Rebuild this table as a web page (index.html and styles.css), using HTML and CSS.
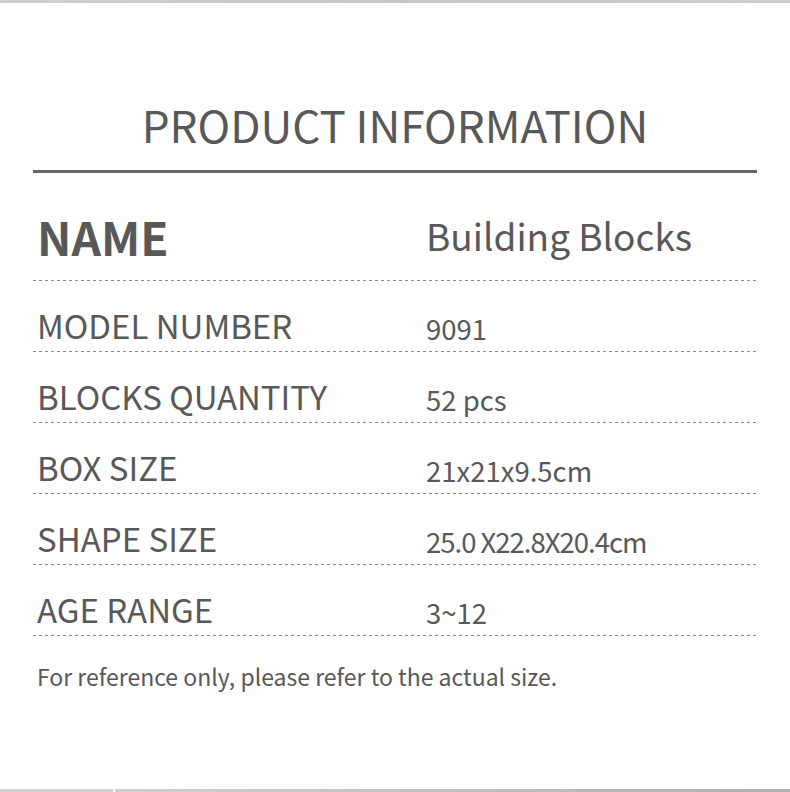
FILE: index.html
```html
<!DOCTYPE html>
<html lang="en">
<head>
<meta charset="utf-8">
<title>Product Information</title>
<link rel="stylesheet" href="styles.css">
</head>
<body>
<div class="page">
  <div class="top-bar"></div>
  <div class="sheet">
    <header class="header">
      <h1 class="title">PRODUCT INFORMATION</h1>
    </header>
    <div class="row row-name">
      <div class="label label-name">NAME</div>
      <div class="value value-name">Building Blocks</div>
    </div>
    <div class="row">
      <div class="label">MODEL NUMBER</div>
      <div class="value">9091</div>
    </div>
    <div class="row">
      <div class="label">BLOCKS QUANTITY</div>
      <div class="value">52 pcs</div>
    </div>
    <div class="row">
      <div class="label">BOX SIZE</div>
      <div class="value">21x21x9.5cm</div>
    </div>
    <div class="row">
      <div class="label">SHAPE SIZE</div>
      <div class="value value-tight">25.0 X22.8X20.4cm</div>
    </div>
    <div class="row">
      <div class="label">AGE RANGE</div>
      <div class="value">3~12</div>
    </div>
    <p class="note">For reference only, please refer to the actual size.</p>
  </div>
  <div class="bottom-bar">
    <div class="seg seg-left"></div>
    <div class="seg seg-right"></div>
  </div>
</div>
</body>
</html>
```
FILE: styles.css
```css
* { box-sizing: border-box; }
html, body { margin: 0; padding: 0; background: #fff; }
body {
  font-family: "Noto Sans CJK SC", "Source Sans Pro", "Open Sans", sans-serif;
  color: #585858;
}
.page {
  width: 790px;
  height: 792px;
  overflow: hidden;
  display: flex;
  flex-direction: column;
}
.top-bar {
  height: 3px;
  flex: none;
  background: linear-gradient(90deg, #cfcfcf, #c6c6c6 50%, #cdcdcd);
}
.sheet {
  flex: 1;
  padding: 0 33px;
}
.header {
  padding-top: 99px;
  padding-bottom: 24px;
  border-bottom: 3px solid #666;
  text-align: center;
}
.title {
  margin: 0;
  font-size: 44px;
  line-height: 44px;
  font-weight: 400;
  color: #585858;
}
.row {
  display: flex;
  align-items: flex-start;
  height: 71px;
  padding-left: 4px;
  background: repeating-linear-gradient(90deg, #8a8a8a 0 3px, transparent 3px 6px) left bottom / 100% 1px no-repeat;
}
.row-name { height: 108px; }
.label {
  width: 389px;
  flex: none;
  font-size: 33px;
  line-height: 33px;
  padding-top: 28px;
}
.value {
  font-size: 27.5px;
  line-height: 28px;
  padding-top: 33px;
}
.value-tight { letter-spacing: -1px; }
.label-name {
  font-size: 46px;
  line-height: 48px;
  font-weight: 700;
  padding-top: 39px;
}
.value-name {
  font-size: 37px;
  line-height: 40px;
  padding-top: 42px;
}
.note {
  margin: 0;
  padding-left: 4px;
  padding-top: 28px;
  font-size: 23px;
  line-height: 24px;
}
.bottom-bar {
  flex: none;
  height: 3px;
  display: flex;
  gap: 2px;
}
.seg { height: 3px; }
.seg-left { width: 113px; background: #d2d2d2; }
.seg-right { flex: 1; background: linear-gradient(90deg, #d0d0d0, #b0b0b0); }
```
